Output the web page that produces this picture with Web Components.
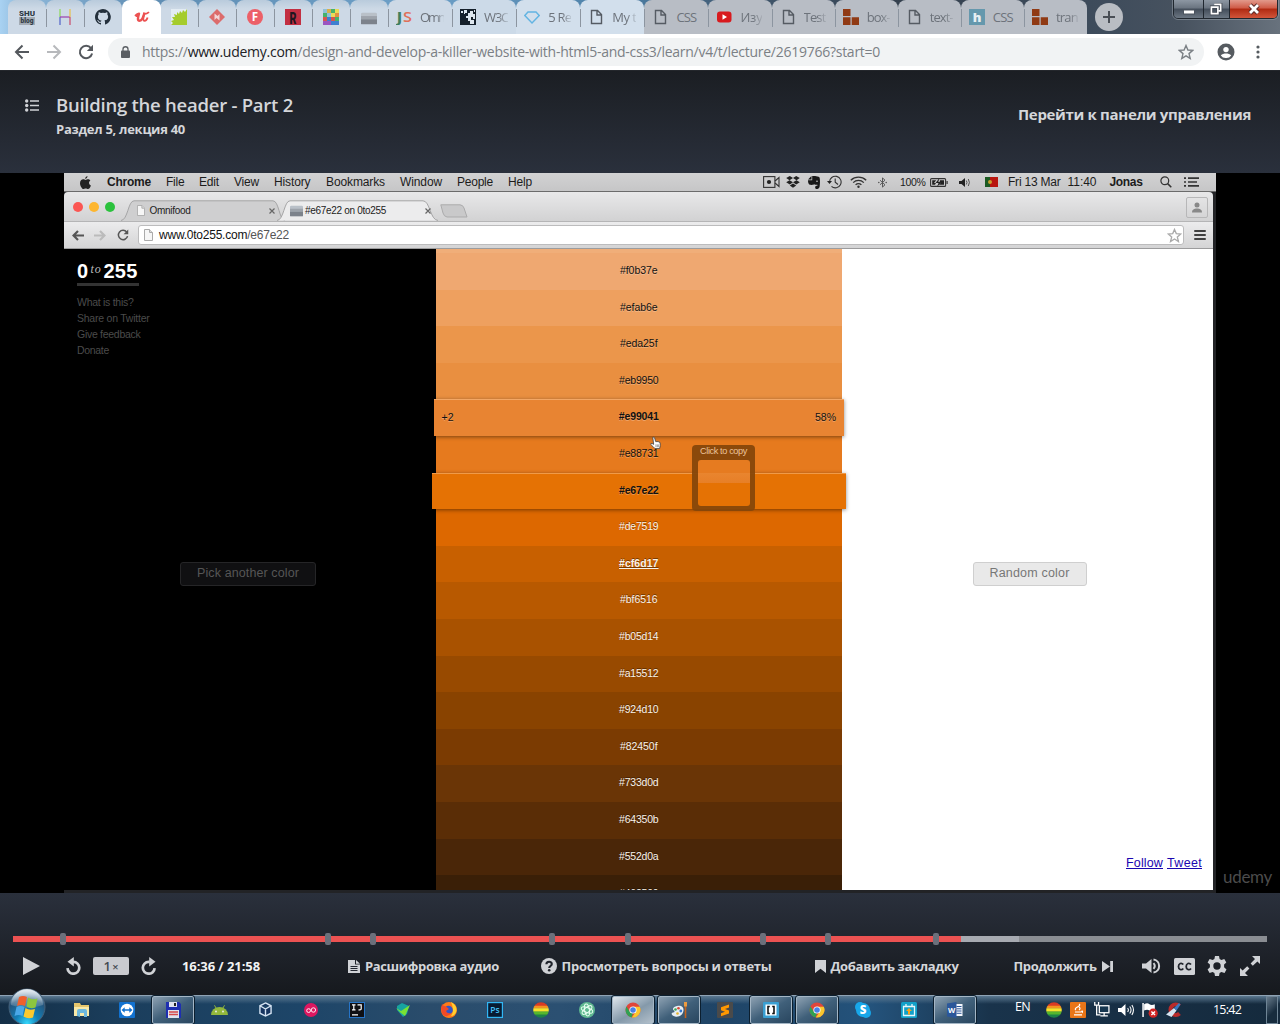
<!DOCTYPE html>
<html lang="ru">
<head>
<meta charset="utf-8">
<title>Building the header - Part 2</title>
<style>
html,body{margin:0;padding:0;background:#000}
body{width:1280px;height:1024px;overflow:hidden}
</style>
</head>
<body>
<desktop-screen></desktop-screen>
<script>
const ICONS = {
shu:['0 0 16 16','<rect y="8" width="16" height="8" fill="#a3abb4"/><text x="8" y="7" font-family="Roboto" font-weight="900" font-size="8" textLength="16" lengthAdjust="spacingAndGlyphs" text-anchor="middle" fill="#2f3b46">SHU</text><text x="8" y="14" font-family="Roboto" font-weight="900" font-size="6.5" textLength="13" lengthAdjust="spacingAndGlyphs" text-anchor="middle" fill="#2f3b46">blog</text>'],
habr:['0 0 16 16','<path d="M3 0v8" stroke="#8bd957" stroke-width="1.2"/><path d="M3 8v8" stroke="#4f62c8" stroke-width="1.2"/><path d="M3 8h10" stroke="#9b3fb0" stroke-width="1.2"/><path d="M13 0v8" stroke="#e8c04a" stroke-width="1.2"/><path d="M13 8v8" stroke="#c84a6a" stroke-width="1.2"/>'],
github:['0 0 16 16','<path fill="#24303c" d="M8 0C3.6 0 0 3.6 0 8c0 3.5 2.3 6.5 5.5 7.6.4.1.5-.2.5-.4v-1.4c-2.2.5-2.7-1-2.7-1-.4-.9-.9-1.2-.9-1.2-.7-.5.1-.5.1-.5.8.1 1.2.8 1.2.8.7 1.3 1.9.9 2.3.7.1-.5.3-.9.5-1.1-1.8-.2-3.6-.9-3.6-4 0-.9.3-1.6.8-2.1-.1-.2-.4-1 .1-2.1 0 0 .7-.2 2.2.8a7.6 7.6 0 0 1 4 0c1.500-1 2.200-.8 2.200-.8.4 1.100.2 1.900.1 2.100.5.6.8 1.300.8 2.100 0 3.100-1.900 3.700-3.700 3.900.3.3.6.8.6 1.500v2.200c0 .2.1.5.6.4A8 8 0 0 0 8 0z"/>'],
udemy:['0 0 16 16','<path d="M1.200 7.200Q3.500 4.800 5 4.600C4.200 7.500 3 11.800 5.200 11.800 7.500 11.800 9.600 7.500 10.500 3.500" fill="none" stroke="#ec5252" stroke-width="2.400" stroke-linejoin="round"/><path d="M10.300 4C9.300 8 8.600 11.800 10.500 11.800 12 11.800 13 10.500 13.600 8.500M10 5.200Q13 5 15 3.200" fill="none" stroke="#ec5252" stroke-width="1.800"/>'],
leaf:['0 0 16 16','<rect width="16" height="16" fill="#e3ecf3"/><path fill="#a5cc2c" d="M16 0v16H0l2-2-2-2 3-1-2-3 3 0-1-3 3 1 0-3 2 2 1-3 2 2 1-3 2 2z"/>'],
diamond:['0 0 16 16','<path fill="#dc6c6c" d="M8 0l8 8-8 8-8-8z"/><path fill="#f3d6d8" d="M5.500 4.500v6.500l2-2 3 2.500V5l-2 2z"/>'],
fcircle:['0 0 16 16','<circle cx="8" cy="8" r="8" fill="#ec6068"/><text x="8" y="12.300" text-anchor="middle" font-family="Open Sans" font-weight="700" font-size="11.500" fill="#fff">F</text>'],
rbox:['0 0 16 16','<rect width="16" height="16" fill="#c22f42"/><text x="8" y="14.500" text-anchor="middle" font-family="Roboto" font-weight="900" font-size="17" textLength="7" lengthAdjust="spacingAndGlyphs" fill="#1f1720">R</text>'],
mosaic:['0 0 16 16','<rect width="16" height="16" fill="#d8b04a"/><path fill="#8fc0d8" d="M0 0h4v4H0zM4 4h4v4H4z"/><path fill="#46b26b" d="M0 4h4v4H0zM8 0h4v4H8zM12 8h4v4h-4z"/><path fill="#3d7fd0" d="M4 8h4v4H4zM8 12h8v4H8z"/><path fill="#d85550" d="M0 8h4v4H0zM8 8h4v4H8z"/><path fill="#9a55c0" d="M0 12h8v4H0z"/><path fill="#e9db58" d="M12 0h4v4h-4zM8 4h4v4H8z"/><path fill="#e09040" d="M12 4h4v4h-4z"/>'],
grays:['0 0 16 16','<rect y="1" width="16" height="14" rx="1.500" fill="#b9c0c8"/><path fill="#9da3ab" d="M0 5h16v4H0z"/><path fill="#7c828b" d="M0 9h16v6H0z"/>'],
js:['0 0 16 16','<text x="0" y="13" font-family="Open Sans" font-weight="600" font-size="14" textLength="7" lengthAdjust="spacingAndGlyphs" fill="#3f7f5f">J</text><text x="7" y="13" font-family="Open Sans" font-weight="600" font-size="14" textLength="9" lengthAdjust="spacingAndGlyphs" fill="#e07058">S</text>'],
w3c:['0 0 16 16','<rect width="16" height="16" fill="#15202b"/><path fill="#dde6ee" d="M1 2h2v2H1zM4 1h3v3H5v1H4zM8 4h2V2h3v3h2v5h-2V8h-2v3h3v4h-4v-3H8V9H6V7h2zM14 1h1v2h-1z"/>'],
gem:['0 0 16 16','<path fill="none" stroke="#62b4e2" stroke-width="1.400" d="M4 3h8l3.200 3.500L8 14 .8 6.500z"/>'],
page:['0 0 16 16','<path fill="none" stroke="#555b63" stroke-width="1.400" d="M3.500 1.500h6l4 4v9h-10zM9 1.500V6h4.500"/>'],
yt:['0 0 16 16','<rect x="1" y="2.500" width="14.500" height="11" rx="3" fill="#d81a1e"/><path fill="#fff" d="M6.500 5.200v5.500L11 8z"/>'],
bricks:['0 0 16 16','<path fill="#903a14" d="M0 0h7.500v7H0zM0 8.200h7.500V16H0zM8.700 8.200H16V16H8.700z"/>'],
hbox:['0 0 16 16','<rect width="16" height="16" fill="#6598ad"/><text x="8" y="13" text-anchor="middle" font-family="Open Sans" font-weight="800" font-size="13" fill="#e8eff3">h</text>'],
back:['0 0 16 16','<path d="M15 8H2M8.500 1.500 2 8l6.500 6.500" fill="none" stroke="currentColor" stroke-width="2"/>'],
fwd:['0 0 16 16','<path d="M1 8h13M7.500 1.500 14 8l-6.500 6.500" fill="none" stroke="currentColor" stroke-width="2"/>'],
reload:['0 0 16 16','<path d="M13 4.200A6.200 6.200 0 1 0 14.100 9.500" fill="none" stroke="currentColor" stroke-width="2"/><path d="M15 .8v6.200H8.800z" fill="currentColor"/>'],
lock:['0 0 10 13','<rect y="5" width="10" height="8" rx="1" fill="#5a5e63"/><path d="M2.200 5.500V3.600a2.800 2.800 0 0 1 5.600 0v1.900" fill="none" stroke="#5a5e63" stroke-width="1.400"/>'],
star:['0 0 16 16','<path d="M8 1.500l1.900 4.500 4.800.4-3.700 3.200 1.200 4.800L8 11.800l-4.200 2.600L5 9.600 1.300 6.400l4.800-.4z" fill="none" stroke="currentColor" stroke-width="1.400"/>'],
user:['0 0 18 18','<circle cx="9" cy="9" r="8.500" fill="#565b60"/><circle cx="9" cy="6.600" r="2.700" fill="#fff"/><path fill="#fff" d="M3.800 12.500C5 10.800 7 10.400 9 10.400s4 .4 5.200 2.100A6 6 0 0 1 9 15a6 6 0 0 1-5.200-2.500z"/>'],
dots:['0 0 4 14','<circle cx="2" cy="2" r="1.600" fill="#565b60"/><circle cx="2" cy="7" r="1.600" fill="#565b60"/><circle cx="2" cy="12" r="1.600" fill="#565b60"/>'],
plus:['0 0 28 28','<circle cx="14" cy="14" r="14" fill="#b9bdc3"/><path d="M14 8v12M8 14h12" stroke="#4a4f56" stroke-width="2"/>'],
minw:['0 0 12 12','<rect x=".5" y="5" width="11" height="4" fill="#fff" stroke="#4c545f"/>'],
restw:['0 0 14 14','<path d="M4.500 1.500h7v7h-2M1.500 4.500h7v7h-7z" fill="none" stroke="#3e454f" stroke-width="3.600"/><path d="M4.500 1.500h7v7h-2M1.500 4.500h7v7h-7z" fill="none" stroke="#fff" stroke-width="1.800"/>'],
closew:['0 0 12 12','<path d="M2 2l8 8M10 2l-8 8" stroke="#5a2a28" stroke-width="4.600"/><path d="M2 2l8 8M10 2l-8 8" stroke="#fff" stroke-width="2.800"/>'],
list:['0 0 14 13','<path d="M5 2h9M5 6.500h9M5 11h9" stroke="#d0d2d6" stroke-width="1.700"/><circle cx="1.700" cy="2" r="1.700" fill="#d0d2d6"/><circle cx="1.700" cy="6.500" r="1.700" fill="#d0d2d6"/><circle cx="1.700" cy="11" r="1.700" fill="#d0d2d6"/>'],
apple:['0 0 11 13','<path fill="#222" d="M7.500 0c.1 1.500-1 2.800-2.300 2.900C5.100 1.500 6.200.3 7.500 0zM8 3.300c.9 0 1.800.5 2.400 1.300-2 1.200-1.700 4 .5 4.800C10.400 11 9.300 13 8 13c-.9 0-1.200-.6-2.300-.6-1.100 0-1.500.6-2.300.6C1.900 13 0 9.700 0 7.200c0-2.500 1.600-3.900 3.200-3.900 1 0 1.800.7 2.500.7S7 3.300 8 3.300z"/>'],
cam:['0 0 17 12','<rect x=".6" y=".6" width="11.300" height="10.800" fill="none" stroke="#333" stroke-width="1.100"/><circle cx="6" cy="6" r="2.100" fill="#222"/><path d="M12 5l4-3.500v9L12 7" fill="none" stroke="#333" stroke-width="1.100"/>'],
dropbox:['0 0 14 13','<path fill="#222" d="M3.800 0L7 2.300 3.500 4.600.2 2.300zM10.200 0l3.600 2.300-3.300 2.300L7 2.300zM.2 6.800l3.300-2.200L7 6.900 3.800 9.200zM13.800 6.800l-3.300-2.200L7 6.900l3.200 2.300zM3.800 10.200L7 8l3.200 2.200L7 12.700z"/>'],
evernote:['0 0 12 13','<path fill="#181818" d="M0 3.500L3.500 0v3.500zM4.200 0h3c1 .6 3.600.5 4.200 1.200.8 1.500.7 6.300.2 9.500-.3 1.800-1.500 2.300-3.400 2.300-1.400 0-1.400-3 .2-3.200h1V8.700c-2-.3-3 .6-3.200-.7-.7 1.200-4 1-5 .4C.2 7.600 0 5.500 0 4.300h4.200z"/><circle cx="9" cy="5.300" r=".8" fill="#ccc"/>'],
tm:['0 0 15 14','<path d="M2.500 7a5.800 5.800 0 1 1 2 4.400" fill="none" stroke="#333" stroke-width="1.100"/><path d="M0 6h5L2.500 9z" fill="#222"/><path d="M8.200 3.500V7.200L11 9.500" fill="none" stroke="#333" stroke-width="1.100"/>'],
wifi:['0 0 17 12','<path d="M.8 4.200a11 11 0 0 1 15.400 0M3.200 6.600a7.600 7.600 0 0 1 10.600 0M5.600 8.900a4.200 4.200 0 0 1 5.800 0" fill="none" stroke="#333" stroke-width="1.300"/><circle cx="8.500" cy="10.700" r="1.200" fill="#333"/>'],
bt:['0 0 9 12','<path d="M2 3.500l5 5L4.500 11V1L7 3.500l-5 5" fill="none" stroke="#555" stroke-width="1"/><circle cx=".8" cy="6" r=".8" fill="#555"/><circle cx="8.200" cy="6" r=".8" fill="#555"/>'],
batt:['0 0 18 9','<rect x=".6" y=".6" width="15" height="7.800" rx="1" fill="none" stroke="#333" stroke-width="1.100"/><path d="M16.500 3h1.200v3h-1.200z" fill="#333"/><path fill="#222" d="M2.200 2.200h4L4 5h2L5 6.800H2.200zM10 2.200h4v4.600H9l2.200-2.500H9.500z"/><path d="M9.500 0L5.500 5h3L7 9l4.500-5H8.300z" fill="#222"/>'],
spk:['0 0 11 9','<path fill="#222" d="M0 3h2.500L6 0v9L2.500 6H0z"/><path d="M7.300 2.500q1.400 2 0 4M9.300 1q2.200 3.500 0 7" fill="none" stroke="#555" stroke-width="1"/>'],
flag:['0 0 13 10','<rect width="13" height="10" fill="#b8160f"/><rect width="5" height="10" fill="#1b5a22"/><circle cx="5" cy="5" r="2" fill="#c99e2c"/>'],
mag:['0 0 12 12','<circle cx="4.800" cy="4.800" r="3.900" fill="none" stroke="#333" stroke-width="1.200"/><path d="M7.600 7.600l3.700 3.700" stroke="#333" stroke-width="1.500"/>'],
nlist:['0 0 15 10','<path d="M4 1.200h11M4 5h9M4 8.800h11" stroke="#333" stroke-width="1.700"/><path d="M0 1.200h2M0 5h2M0 8.800h2" stroke="#333" stroke-width="1.700"/>'],
mback:['0 0 12 11','<path d="M12 5.500H2M6 1L1.500 5.500 6 10" fill="none" stroke="currentColor" stroke-width="2.200"/>'],
mfwd:['0 0 12 11','<path d="M0 5.500h10M6 1l4.500 4.500L6 10" fill="none" stroke="currentColor" stroke-width="2.200"/>'],
doc:['0 0 9 12','<path d="M.5.5h5l3 3v8h-8z" fill="#f6f6f6" stroke="#aaa"/><path d="M5.500.5v3h3" fill="#ddd" stroke="#aaa"/>'],
x:['0 0 6 6','<path d="M.5.500l5 5M5.500.500l-5 5" stroke="#666" stroke-width="1.200"/>'],
person:['0 0 10 11','<circle cx="5" cy="3" r="2.500" fill="#888"/><path d="M0 10.500C0 7.500 2.200 6.500 5 6.500s5 1 5 4z" fill="#888"/>'],
play:['0 0 17 18','<path d="M0 0l17 9-17 9z" fill="#d0d2d6"/>'],
rew:['0 0 17 18','<path d="M8 4.600H9a5.900 5.900 0 1 1-5.900 6.200" fill="none" stroke="#d0d2d6" stroke-width="2.700" transform="translate(-.6 .3)"/><path d="M8.800 0v9.400L2.500 4.800z" fill="#d0d2d6"/>'],
ffw:['0 0 17 18','<g transform="translate(17 0) scale(-1 1)"><path d="M8 4.600H9a5.900 5.900 0 1 1-5.900 6.200" fill="none" stroke="#d0d2d6" stroke-width="2.700" transform="translate(.3 .3)"/><path d="M8.800 0v9.400L2.500 4.800z" fill="#d0d2d6"/></g>'],
trans:['0 0 12 13','<path d="M0 0h7v4.500h5V13H0zM8 0l4 3.700H8z" fill="#d0d2d6"/><path d="M2.500 6.500h7M2.500 8.500h7M2.500 10.500h7" stroke="#22262f" stroke-width="1"/>'],
quest:['0 0 16 16','<circle cx="8" cy="8" r="8" fill="#d0d2d6"/><path d="M5.400 6.300C5.400 3 10.800 3 10.800 6c0 2-2.600 2-2.600 4" fill="none" stroke="#20242c" stroke-width="2.100"/><circle cx="8.200" cy="12.200" r="1.300" fill="#20242c"/>'],
bookm:['0 0 11 13','<path d="M0 0h11v13L5.500 8.800 0 13z" fill="#d0d2d6"/>'],
next:['0 0 11 11','<path d="M0 0l8 5.500L0 11zM8.200 0H11v11H8.200z" fill="#d0d2d6"/>'],
vol:['0 0 19 16','<path d="M0 5.500h4l5.500-4.500v14L4 10.500H0z" fill="#d0d2d6"/><path d="M11.500 5.200q2.500 2.800 0 5.600M11.500 1.500c7.500 1 7.500 12 0 13" fill="none" stroke="#d0d2d6" stroke-width="2"/>'],
cc:['0 0 21 17','<rect width="21" height="17" rx="1.500" fill="#d0d2d6"/><path d="M9.300 6.500C7.500 4.300 4.500 5.300 4.500 8.500s3 4.200 4.800 2M17 6.500c-1.800-2.200-4.800-1.200-4.800 2s3 4.200 4.800 2" fill="none" stroke="#20242c" stroke-width="1.800"/>'],
gear:['0 0 20 20','<path fill="#d0d2d6" fill-rule="evenodd" d="M8 0h4l.6 3 1.800.9L17.300 3l2 3.400-2.200 2v2.800l2.400 2.200-2 3.500-3.100-1-1.800 1L12 20H8l-.6-3-1.800-1-3 1-2-3.600 2.300-2.100V8.600L.6 6.500l2-3.500 3 .9L7.400 3zM10 6.300a3.700 3.700 0 1 0 0 7.400 3.700 3.700 0 0 0 0-7.400z"/>'],
expand:['0 0 20 20','<path fill="#d0d2d6" d="M12 0h8v8l-2.600-2.600-4.600 4.400-2.200-2.200L15 3zM8 20H0v-8l2.600 2.600 4.600-4.400 2.200 2.200L5 17z"/>'],
orb:['0 0 38 38','<defs><radialGradient id="o" cx=".5" cy=".95" r=".9"><stop offset="0" stop-color="#35d6fa"/><stop offset=".35" stop-color="#1380b8"/><stop offset=".75" stop-color="#24557d"/><stop offset="1" stop-color="#9ab4c8"/></radialGradient><linearGradient id="g" x2="0" y2="1"><stop offset="0" stop-color="#fff" stop-opacity=".75"/><stop offset="1" stop-color="#fff" stop-opacity=".1"/></linearGradient></defs><circle cx="19" cy="19" r="18" fill="url(#o)" stroke="#456078"/><path d="M3 17A16 16 0 0 1 35 17Q19 23 3 17z" fill="url(#g)"/><path fill="#f0602c" d="M11 9q4-2 8 0l-2 9q-4-2-8 0z"/><path fill="#8cc63f" d="M20 9.500q4 3 9.500 1l-2 9q-5 2-9-1z"/><path fill="#4aa8e8" d="M8.500 19q4-2 8 0l-2 9q-4-2-8 0z"/><path fill="#fcc92e" d="M17.500 20q4 3 9.500 1l-2 8.500q-5 2-9.500-1z"/>'],
folder:['0 0 17 17','<path fill="#e6c66c" d="M1 2h6l1 2h8v11H1z"/><path fill="#f9e9a8" d="M1 6h15v9H1z"/><path fill="#6db8dd" d="M4 15v-5q0-2 2-2h6q2 0 2 2v6h-3v-4H7v4z"/>'],
tv:['0 0 16 16','<rect width="16" height="16" rx="1" fill="#1272d0"/><circle cx="8" cy="8" r="6.300" fill="#fff"/><path fill="#1272d0" d="M2.500 8l3.200-2.700v1.900h4.600V5.300L13.500 8l-3.200 2.700V8.800H5.700v1.900z"/>'],
floppy:['0 0 16 16','<path fill="#1e2fb0" d="M1 0h13l2 2v14H1z"/><path fill="#dfe3ee" d="M4 0h8v5H4zM3 8h11v8H3z"/><path fill="#222" d="M9 1h2v3H9z"/><path d="M4 10h9M4 12.500h9" stroke="#d84848" stroke-width="1.400"/>'],
android:['0 0 17 10','<path fill="#93b83c" d="M0 10a8.500 8 0 0 1 17 0z"/><path d="M5 3L3.500.3M12 3L13.500.3" stroke="#93b83c"/><circle cx="5" cy="6.500" r=".9" fill="#eee"/><circle cx="12" cy="6.500" r=".9" fill="#eee"/>'],
vbox:['0 0 14 16','<path d="M7 1l6 3v8l-6 3-6-3V4zM1 4l6 3.500L13 4M7 7.500V15" fill="#16345f" stroke="#d5e3f2" stroke-width="1.500"/>'],
oo:['0 0 14 14','<circle cx="7" cy="7" r="7" fill="#dd1760"/><circle cx="4.600" cy="7.600" r="1.900" fill="none" stroke="#fff" stroke-width=".9"/><circle cx="9.400" cy="7" r="2.200" fill="none" stroke="#fff" stroke-width=".9"/>'],
ij:['0 0 16 16','<rect x=".5" y=".5" width="15" height="15" fill="#101014" stroke="#2674c8"/><path d="M3 2.800h3.500M4.800 2.800v5M3 7.800h3.500M8.500 2.800h3.700v4q0 1.500-2.700 1M3 12.800h6" fill="none" stroke="#fff" stroke-width="1.200"/>'],
gem2:['0 0 14 14','<path fill="#17a3a0" d="M1 3l5-3 7 3-2 8-4 3-6-7z"/><path fill="#7ae234" d="M0 5l5 3 9-6-5 11-4-3z"/>'],
ff:['0 0 16 16','<circle cx="8" cy="8" r="8" fill="#ff7a18"/><path fill="#ffd02f" d="M10 0q6 3 5.500 9Q14 14 10 14q4-5 0-14z"/><circle cx="7.500" cy="8" r="4.300" fill="#3155c8"/><path fill="#f04a28" d="M1 2q1 2 4 2.500L8 7 5 9q1 3 5 2-3 5-8 2-3-4-1-11z"/>'],
ps:['0 0 16 16','<rect x=".6" y=".6" width="14.800" height="14.800" fill="#071b33" stroke="#31b6f5" stroke-width="1.200"/><text x="8" y="11.300" text-anchor="middle" font-family="Open Sans" font-weight="600" font-size="8.500" fill="#44c1fa">Ps</text>'],
rainbow:['0 0 16 16','<clipPath id="r"><circle cx="8" cy="8" r="7.800"/></clipPath><g clip-path="url(#r)"><path fill="#d93a24" d="M0 0h16v4H0z"/><path fill="#f39220" d="M0 3.800h16v2.600H0z"/><path fill="#f7e32b" d="M0 6.200h16v3.600H0z"/><path fill="#57b62d" d="M0 9.600h16V13H0z"/><path fill="#1d8247" d="M0 12.600h16V16H0z"/></g>'],
atom:['0 0 16 16','<circle cx="8" cy="8" r="8" fill="#5fb890"/><g fill="none" stroke="#e8fff2" stroke-width="1"><ellipse cx="8" cy="8" rx="6" ry="2.400" transform="rotate(20 8 8)"/><ellipse cx="8" cy="8" rx="6" ry="2.400" transform="rotate(80 8 8)"/><ellipse cx="8" cy="8" rx="6" ry="2.400" transform="rotate(140 8 8)"/></g>'],
chrome:['0 0 16 16','<circle cx="8" cy="8" r="7.500" fill="#e0453a"/><path fill="#30a152" d="M1.500 4.500L5 10l3 1-1.500 4.400A7.500 7.500 0 0 1 1.500 4.500z"/><path fill="#fbc82d" d="M8 4.800h6.800A7.500 7.500 0 0 1 6.800 15.400L11 9.500z"/><circle cx="8" cy="8" r="3.600" fill="#fff"/><circle cx="8" cy="8" r="2.800" fill="#4781e8"/>'],
paint:['0 0 17 16','<path fill="#e6edf4" d="M6 4c4-1 7 1 6.500 4.500C12 13 8 15.500 4 14.500c-4-1-4-4-2-4s2-1 .5-2.500S3 4.500 6 4z"/><circle cx="4.500" cy="7.500" r="1.300" fill="#3faa55"/><circle cx="7.500" cy="6.300" r="1.300" fill="#d84a38"/><circle cx="9.800" cy="9" r="1.400" fill="#3478d0"/><circle cx="6.500" cy="11.500" r="1.300" fill="#e6b32e"/><path d="M14.500 1v15" stroke="#c4621c" stroke-width="1.600"/><path d="M13 0h3v4.500h-3z" fill="#eb9b40"/>'],
subl:['0 0 16 16','<rect width="16" height="16" rx="1" fill="#4a4a4a"/><path fill="#ff9800" d="M12 2.500v3L8 7l4 1.500v3l-8 2.700v-3L8 9.700 4 8.200v-3z"/>'],
brack:['0 0 16 16','<rect width="16" height="16" rx="1" fill="#3a9fd2"/><rect x="2.500" y="2.500" width="11" height="11" fill="#fff"/><path d="M6.800 4.500H5v7h1.800M9.200 4.500H11v7H9.200" fill="none" stroke="#111" stroke-width="1.600"/>'],
skype:['0 0 16 16','<circle cx="5" cy="5" r="5" fill="#18a7ea"/><circle cx="11" cy="11" r="5" fill="#18a7ea"/><circle cx="8" cy="8" r="7" fill="#18a7ea"/><text x="8" y="12.200" text-anchor="middle" font-family="Open Sans" font-weight="800" font-size="11.500" fill="#fff">S</text>'],
cal:['0 0 16 16','<rect width="16" height="16" rx="1.500" fill="#12a0c8"/><path d="M2.500 4.500h11v9h-11zM5 2v3M11 2v3" fill="none" stroke="#e8f6fa" stroke-width="1.300"/><path fill="#f9a11b" d="M8 6l3 3H9v3.500H7V9H5z"/>'],
word:['0 0 16 16','<path d="M8 2h7.500v12H8z" fill="#f4f7fc"/><path d="M9.500 4.500h5M9.500 6.800h5M9.500 9h5M9.500 11.300h5" stroke="#2b579a" stroke-width="1"/><path fill="#2b579a" d="M0 1.500L9.500 0v16L0 14.500z"/><text x="4.700" y="11" text-anchor="middle" font-family="Open Sans" font-weight="700" font-size="7.500" fill="#fff">W</text>'],
java:['0 0 16 16','<rect width="16" height="16" rx="1" fill="#e87518"/><path d="M5 10h6M4 12.800h8M6 8q-2-1 1.500-3T9 2M9 8q2-1.500 0-3M11 9.500q2.500-1.500 1 1.500" fill="none" stroke="#fff" stroke-width="1.200"/>'],
net:['0 0 15 14','<rect x="5" y="3.500" width="9" height="6.500" fill="#16364f" stroke="#fff" stroke-width="1.200"/><path d="M6 13h7M9.500 10v3M2.500 5v7H6M.7 0v3h3.600V0M2.500 3v2" fill="none" stroke="#fff" stroke-width="1.200"/>'],
tvol:['0 0 15 14','<path fill="#fff" d="M0 5h3l4-4v12L3 9H0z"/><path d="M9 5q1.500 2 0 4M11 3.500q2.500 3.500 0 7M13 2q3 5 0 10" fill="none" stroke="#fff"/>'],
tflag:['0 0 15 15','<path d="M1 1v13" stroke="#fff" stroke-width="1.400"/><path fill="#fff" d="M2 2q3-1.500 5 0t5 0v6q-3 1.500-5 0t-5 0z"/><circle cx="10.500" cy="10.500" r="4.300" fill="#cf2424"/><path d="M8.800 8.800l3.400 3.400M12.200 8.800l-3.400 3.400" stroke="#fff" stroke-width="1.300"/>'],
ccl:['0 0 16 16','<path d="M13.500 4A5.300 5.300 0 1 0 13.500 11.500" fill="none" stroke="#b92a2a" stroke-width="4"/><path fill="#d5e3f0" d="M0 12.500L8 6l2.500 2.500L5.500 15z"/><path fill="#3878c0" d="M8 6l5-5 1.500 1.500-4 6z"/>'],
hand:['0 0 12 15','<path d="M3 1.500q1.500-1 2 .5l1.200 4q3-.5 4.800 1 .8 3-.5 6.500h-5Q3 11 .8 9q0-1.500 1.500-1L4 9z" fill="#fff" stroke="#444" stroke-width=".9"/><path d="M6.500 9v3M8 9v3M9.500 9v3" stroke="#666" stroke-width=".7"/>']
};
const part = (name, html) => customElements.define(name, class extends HTMLElement {
  constructor(){ super(); this.attachShadow({mode:'open'}).innerHTML = html; }
});
const I = (n,w,h,s='') => `<ui-icon n="${n}" w="${w}" h="${h||w}" style="${s}"></ui-icon>`;
const T = (t,w,s='') => `<fit-text w="${w}" style="${s}">${t}</fit-text>`;

/* browser tab strip */
const small = ['shu','habr','github','udemy','leaf','diamond','fcircle','rbox','mosaic','grays'];
const wide = [['js','Omn',24],['w3c','W3C',24],['gem','5 Re',23],['page','My t',24],['page','CSS',20],['yt','Изу',22],['page','Test',22],['bricks','box-',23],['page','text-',23],['hbox','CSS',20],['bricks','tran',22]];
const tint = i => i < 11 ? '#cdd9e6' : i < 12 ? '#ccdae8' : i < 14 ? '#d2dfec' : '#b8bdc5';
part('browser-tabs', `<style>
:host{display:flex;height:34px;background:linear-gradient(90deg,#a9d2f2 0,#8fb9db 20px,#5f8db3 150px,#6da0c8 420px,#4c7fa6 620px,#41586f 740px,#34404e 900px,#3d4b5b 1090px,#47525f 1180px,#68727d 1280px);font:13px/34px "Open Sans",sans-serif;color:#6d737b;padding-left:8px;box-sizing:border-box}
.t{display:flex;align-items:center;box-sizing:border-box;height:34px;border-radius:8px 8px 0 0;position:relative;flex:none}
.s{width:38px;justify-content:center}.w{width:63.1px;padding-left:8px;gap:8px}.w.k{width:64.1px}
.t::after{content:"";position:absolute;right:-1px;top:9px;height:18px;width:1px;background:#8c95a0;z-index:1}
.on::after,.pre::after,.end::after{display:none}
.on{background:#fff!important;width:39px;margin-right:-1px;z-index:1}
.fade{-webkit-mask:linear-gradient(90deg,#000 60%,#0003)}
.btns{display:flex;margin-left:50px;height:18px;border:1px solid #20272f;outline:1px solid #9aa3ac88;border-top:0;border-radius:0 0 5px 5px;overflow:hidden}
.btns div{display:flex;align-items:center;justify-content:center;background:linear-gradient(#8d97a3,#6a7480 45%,#434d5a 50%,#6b7682);border-right:1px solid #20272f}
.btns .x{background:linear-gradient(#e29a8c,#cf5a46 45%,#b02a12 50%,#d2553a);border:0}
</style>${small.map((n,i)=>`<div class="t s ${i==3?'on':i==2?'pre':''}" style="background:linear-gradient(#b9cbdc,${tint(i)} 9px)">${n=='grays'?I(n,16,13,'margin-top:2px'):I(n,16)}</div>`).join('')}${wide.map(([n,l,w],i)=>`<div class="t w ${i<5?'k':''} ${i==10?'end':''}" style="background:${tint(i+10)}">${I(n,16)}<div class="${l=='CSS'?'':'fade'}">${T(l,w)}</div></div>`).join('')}
<div style="display:flex;align-items:center;margin-left:8px">${I('plus',28)}</div>
<div class="btns"><div style="width:29px">${I('minw',12,12,'margin-top:3px')}</div><div style="width:25px">${I('restw',13)}</div><div class="x" style="width:47px">${I('closew',12)}</div></div>`);

part('address-bar', `<style>
:host{display:flex;align-items:center;height:36px;background:#fff;border-bottom:1px solid #24272c;padding-left:14px;color:#54585d}
.box{display:flex;align-items:center;margin-left:14px;height:28px;border-radius:14px;background:#f1f3f4;width:1096px;padding-left:13px;box-sizing:border-box;font:14px/28px "Open Sans",sans-serif;color:#7b8085}
b{font-weight:400;color:#202124}
</style>${I('back',16)}${I('fwd',16,16,'margin-left:16px;color:#b7b9bc')}${I('reload',16,16,'margin-left:16px')}
<div class="box">${I('lock',9,12)}${T('https://<b>www.udemy.com</b>/design-and-develop-a-killer-website-with-html5-and-css3/learn/v4/t/lecture/2619766?start=0',738,'margin-left:12px')}${I('star',16,16,'margin-left:298px')}</div>
${I('user',18,18,'margin-left:13px')}${I('dots',4,14,'margin-left:21px')}`);

part('lecture-header', `<style>
:host{display:flex;height:102px;box-sizing:border-box;background:linear-gradient(#1b1e23,#2a303c);color:#d4d6da;font-family:"Open Sans",sans-serif;padding:0 29px 0 25px}
.c{margin-left:17px;padding-top:22px;display:flex;flex-direction:column}
</style>${I('list',14,13,'margin-top:28px')}
<div class="c">${T('Building the header - Part 2',237,'font:600 18.500px/24px &quot;Open Sans&quot;')}${T('Раздел 5, лекция 40',129,'font:700 13px/24px &quot;Open Sans&quot;')}</div>
<div style="margin-left:auto;padding-top:31px">${T('Перейти к панели управления',233,'font:700 15px/24px &quot;Open Sans&quot;')}</div>`);

/* recorded desktop inside the video */
part('mac-menubar', `<style>
:host{display:flex;align-items:center;height:18px;background:linear-gradient(#d2d2d3,#c6c6c7);color:#1c1c1c;font:12px/18px "Liberation Sans",sans-serif;padding-left:16px;border-bottom:1px solid #6b6b6b}
</style>${I('apple',11,13)}${T('<b>Chrome</b>',44,'margin-left:16px')}${[['File',18.5,15],['Edit',20,14.500],['View',25,15],['History',36.500,15],['Bookmarks',59,15.500],['Window',42,15],['People',36,15],['Help',24,15]].map(a=>T(a[0],a[1],`margin-left:${a[2]}px`)).join('')}
${I('cam',17,12,'margin-left:231px')}${I('dropbox',14,12,'margin-left:6px')}${I('evernote',12,13,'margin-left:8px')}${I('tm',15,14,'margin-left:7px')}${I('wifi',17,12,'margin-left:8px')}${I('bt',9,11,'margin-left:11px')}
${T('100%',25.500,'margin-left:13px;font-size:10.500px')}${I('batt',18,9,'margin-left:4px')}${I('spk',11,9,'margin-left:11px')}${I('flag',13,10,'margin-left:15px')}${T('Fri 13 Mar',52.500,'margin-left:10.500px')}${T('11:40',29,'margin-left:7px')}${T('<b>Jonas</b>',33,'margin-left:13px')}${I('mag',12,12,'margin-left:17px')}${I('nlist',15,10,'margin-left:12px')}`);

part('mac-tabs', `<style>
:host{display:flex;height:29px;background:linear-gradient(#e8e8e9,#d2d2d3);border-radius:4px 4px 0 0;font:10px/14px "Liberation Sans",sans-serif;color:#222;box-sizing:border-box;padding:8px 5px 0 9px}
i{width:10px;height:10px;border-radius:50%;margin:2px 6px 0 0}
.tab{display:grid;height:21px}.tab>*{grid-area:1/1}.r{display:flex;align-items:center;z-index:1}
</style><i style="background:#fb5652"></i><i style="background:#fdb62f"></i><i style="background:#2bc23d;margin-right:6px"></i>
<div class="tab" style="width:164px"><svg width="164" height="21"><path d="M0 20.500C7 20 7 .8 13 .8H152C158 .8 158 20 164 20.500" fill="#cfcfd0" stroke="#a5a5a6"/></svg><div class="r">${I('doc',8,11,'margin-left:16px')}${T('Omnifood',41,'margin-left:4.500px')}${I('x',6,6,'margin-left:78px')}</div></div>
<div class="tab" style="width:164px;margin-left:-8px"><svg width="164" height="21"><path d="M0 20.500C7 20 7 .8 13 .8H146C153 .8 153 20 161 20.500" fill="#ececed" stroke="#a5a5a6"/></svg><div class="r">${I('grays',13,12,'margin-left:13px')}${T('#e67e22 on 0to255',81,'margin-left:2px')}${I('x',6,6,'margin-left:38.500px')}</div></div>
<svg width="28" height="14" style="margin:4px 0 0 -1px"><path d="M.8.8H20Q23 1 24 4L27 13H7Q4 12.500 3 9z" fill="#c9c9ca" stroke="#ababac"/></svg>
<div style="margin:-3px 0 0 auto;width:20px;height:19px;border:1px solid #b7b7b8;border-radius:2px;display:flex;align-items:center;justify-content:center">${I('person',10,11)}</div>`);

part('mac-toolbar', `<style>
:host{display:flex;align-items:center;height:28px;box-sizing:border-box;background:linear-gradient(#ececed,#d4d4d5);border-top:1px solid #b5b5b6;border-bottom:1px solid #9c9c9d;padding-left:8px;color:#555;font:12px/18px "Liberation Sans",sans-serif}
.a{display:flex;align-items:center;margin-left:9px;width:1046px;height:20px;box-sizing:border-box;background:#fff;border:1px solid #bcbcbd;border-radius:3px;padding-left:5px}
b{font-weight:400;color:#111}u{display:flex;flex-direction:column;gap:1.500px;margin-left:10px}u s{width:12px;height:2.500px;background:#404040;border-radius:1px}
</style>${I('mback',12,11)}${I('mfwd',12,11,'margin-left:10px;color:#bbb')}${I('reload',12,12,'margin-left:11px')}
<div class="a">${I('doc',9,12)}${T('<b>www.0to255.com</b>/e67e22',130,'margin-left:6px')}${I('star',15,15,'margin-left:878px;color:#aaa')}</div><u><s></s><s></s><s></s></u>`);

part('side-dark', `<style>
:host{display:block;width:372px;box-sizing:border-box;background:#000;padding:11px 0 0 13px;font-family:"Liberation Sans",sans-serif;color:#4b4b4b}
.l{display:flex;align-items:flex-start;height:23px;color:#fff;width:61.5px;border-bottom:3px solid #333}
.n{display:flex;flex-direction:column;margin-top:8px;font-size:10.5px;line-height:16px}
.b{display:flex;justify-content:center;width:134px;height:22px;margin:204px 0 0 103px;border:1px solid #252527;border-radius:3px;background:#101012;font-size:12.5px;line-height:20px;color:#565656}
</style><div class="l">${T('0',11.500,'font:700 20px/22px &quot;Liberation Sans&quot;')}${T('to',11,'font:italic 12px/18px &quot;Liberation Serif&quot;;margin:0 2px 0 2px;color:#bbb')}${T('255',34,'font:700 20px/22px &quot;Liberation Sans&quot;')}</div>
<div class="n">${T('What is this?',56.500)}${T('Share on Twitter',72.500)}${T('Give feedback',63.500)}${T('Donate',32)}</div>
<div class="b">${T('Pick another color',102)}</div>`);

const rows = [['f0b37e','efa871'],['efab6e','eea05f'],['eda25f','eb964b'],['eb9950','e98f40'],['e99041','e88432'],['e88731','e67a1e'],['e67e22','e57204'],['de7519','dd6800'],['cf6d17','c86000'],['bf6516','b85900'],['b05d14','a95200'],['a15512','984a00'],['924d10','894300'],['82450f','7b3b02'],['733d0d','6a3506'],['64350b','5a2d06'],['552d0a','4a2608'],['462509','3a1f07']];
part('swatch-list', `<style>
:host{display:flex;flex-direction:column;width:405.500px;background:#f0ae79;padding-top:4px;box-sizing:border-box;font:10.5px/34.500px "Liberation Sans",sans-serif;position:relative;z-index:2}
.r{height:36.6px;flex:none;display:flex;justify-content:center;color:#111;box-sizing:border-box;text-shadow:0 1px #fff4}
.d{color:#f8f2ea;text-shadow:0 -1px #0006}
.last{flex:1 1 0;min-height:0;overflow:hidden}
.h,.m{position:relative;z-index:1;justify-content:space-between;border-top:1px solid #f3a765;box-shadow:0 1px 4px #0007;line-height:35px}
.h{margin:0 -2.500px;padding:0 8px}.m{margin:0 -4px;justify-content:center;border-top-color:#f09a48;line-height:33px}
.copy{position:absolute;z-index:3;left:256px;top:196px;width:63px;height:66px;box-sizing:border-box;border-radius:4px;background:#84460aee;padding:0 5.500px 5px;color:#ecc39a;font-size:9.2px;line-height:13px;display:flex;flex-direction:column;align-items:center}
.copy div{flex:1;width:100%;margin-top:2px;border-radius:3px;background:linear-gradient(#e67b20 0 28%,#e9852f 28%,#e77f27 50%,#e57204 50%)}
.hand{position:absolute;z-index:4;left:214px;top:187px}
</style>${rows.map(([t,c],i)=>{const w=[0,1,2,9,13].includes(i)?37.500:39.500;
return i==4?`<div class="r h" style="background:#${c}">${T('+2',12)}${T('<b>#e99041</b>',40,'margin-left:9px;line-height:33px')}${T('58%',21)}</div>`:
`<div class="r ${i>6?'d':''} ${i==6?'m':''} ${i==17?'last':''}" style="background:#${c}${i==17?';line-height:37px':''}">${T(i==6?`<b>#${t}</b>`:i==8?`<b style="text-decoration:underline">#${t}</b>`:'#'+t,w)}</div>`}).join('')}
<div class="copy">${T('Click to copy',47)}<div></div></div><span class="hand">${I('hand',11,14)}</span>`);

part('side-light', `<style>
:host{display:flex;flex-direction:column;flex:1;background:#fff;font:12.5px/20px "Liberation Sans",sans-serif}
.b{display:flex;justify-content:center;width:112px;height:22px;margin:313px 0 0 131px;border:1px solid #cfcfcf;border-radius:3px;background:#e9e9e9;color:#777}
.f{display:flex;gap:4px;justify-content:flex-end;margin:266.500px 11px 0 0;color:#1a06b0}
</style><div class="b">${T('Random color',80)}</div><div class="f">${T('<u>Follow</u>',37)}${T('<u>Tweet</u>',35)}</div>`);

part('video-stage', `<style>
:host{display:flex;height:720px;background:#000}
.m{width:1152px;margin-left:64px;background:#222326;display:flex;flex-direction:column}
.w{display:flex;flex-direction:column;width:1149px}
.c{display:flex;height:640.500px;overflow:hidden}
.u{align-self:flex-end;margin:0 0 5px 7px;font:400 17px/22px Lato,sans-serif;color:#4c4c4c}
</style><div class="m"><mac-menubar></mac-menubar><div class="w"><mac-tabs></mac-tabs><mac-toolbar></mac-toolbar><div class="c"><side-dark></side-dark><swatch-list></swatch-list><side-light></side-light></div></div></div><div class="u">${T('udemy',49)}</div>`);

part('player-controls', `<style>
:host{display:flex;flex-direction:column;height:102px;background:linear-gradient(#2a303c,#171a1f 95%);color:#d4d6da;font:700 13px/20px "Open Sans",sans-serif}
.p{position:relative;display:flex;height:6px;margin:43px 13px 0}
.p i{height:6px}.p b{position:absolute;top:-3px;width:6px;height:12px;border-radius:2px;background:#6b707b}
.r{display:flex;align-items:center;height:24px;margin:12px 0 0 23px}
.s{width:36px;height:18px;border-radius:2px;background:#c9cacf;color:#444951;margin:0 12px 0 11px;text-align:center;font:600 13px/18px "Open Sans"}
</style><div class="p"><i style="width:948px;background:#ec5252"></i><i style="width:58px;background:#a7aab1"></i><i style="flex:1;background:#8a8d92"></i>${[63,328,373,552,628,763,828,936].map(x=>`<b style="left:${x-16}px"></b>`).join('')}</div>
<div class="r">${I('play',17,18)}${I('rew',17,18,'margin-left:25px')}<div class="s">1 <span style="font-size:11px;margin-left:-2px">×</span></div>${I('ffw',17,18)}
${T('16:36 / 21:58',78,'margin-left:24px;color:#f2f3f4')}
${I('trans',12,13,'margin-left:88px')}${T('Расшифровка аудио',134,'margin-left:5px')}
${I('quest',16,16,'margin-left:41.500px')}${T('Просмотреть вопросы и ответы',210,'margin-left:5px')}
${I('bookm',11,13,'margin-left:43px')}${T('Добавить закладку',128,'margin-left:5px')}
${T('Продолжить',83,'margin-left:55px')}${I('next',11,11,'margin-left:5px')}
${I('vol',19,16,'margin-left:29px')}${I('cc',21,17,'margin-left:13px')}${I('gear',20,20,'margin-left:12px')}${I('expand',20,20,'margin-left:13px')}</div>`);

const apps = [['folder',17,17],['tv',16],['floppy',16,16,'a'],['android',17,10],['vbox',13,15],['oo',14],['ij',16],['gem2',14],['ff',16],['ps',16],['rainbow',16],['atom',16],['chrome',16,16,'a act'],['paint',17,16,'a'],['subl',16],['brack',16,16,'a'],['chrome',16,16,'a'],['skype',16],['cal',16],['word',16,16,'a']];
part('task-bar', `<style>
:host{display:flex;height:29px;position:relative;background:linear-gradient(#8fa3b5 0 1px,#5b7890 1px,#3d5d7a00 9px),linear-gradient(90deg,#142f47,#1b3e5c 120px,#1d4568 300px,#2a4c6b 430px,#2b5072 560px,#1f4466 720px,#24537c 870px,#19334b 990px,#152a3d);box-sizing:border-box;padding-left:60px;align-items:center}
.orb{position:absolute;left:8px;top:-7px;height:36px;overflow:hidden}
.c{display:flex;align-items:center;justify-content:center;width:42px;height:28px;margin:0 4px 0 0;box-sizing:border-box;flex:none}
.a{border:1px solid #a4b6c5;border-radius:2px;background:linear-gradient(150deg,#8da1b2,#40607a 50%,#29465f);outline:1px solid #0c1f2f}
.act{background:linear-gradient(150deg,#dfe6ec,#8499aa 55%,#b3c0cb)}
.en,.ck{font:12.500px/16px "Open Sans",sans-serif;color:#fff}
.sd{margin-left:25px;width:12px;height:28px;box-sizing:border-box;border:1px solid #6f8596;background:linear-gradient(135deg,#66798a,#172c3e 60%)}
</style><div class="orb">${I('orb',38)}</div>${apps.map(a=>`<div class="c ${a[3]||''}">${I(a[0],a[1],a[2]||a[1])}</div>`).join('')}
<div class="en" style="margin:-5px 0 0 35px">${T('EN',15)}</div>
<div style="display:flex;gap:8px;margin-left:16px;align-items:center">${I('rainbow',16)}${I('java',16)}${I('net',16,15)}${I('tvol',16,14)}${I('tflag',16)}${I('ccl',16)}</div>
<div class="ck" style="margin:0 0 0 31px">${T('15:42',28)}</div><div class="sd"></div>`);

part('desktop-screen', `<style>
:host{display:flex;flex-direction:column;width:1280px;height:1024px;overflow:hidden}
</style><browser-tabs></browser-tabs><address-bar></address-bar>
<lecture-header></lecture-header><video-stage></video-stage><player-controls></player-controls><task-bar></task-bar>`);

customElements.define('ui-icon', class extends HTMLElement {
  constructor(){ super(); this.attachShadow({mode:'open'}); }
  connectedCallback(){
    const w=this.getAttribute('w'), h=this.getAttribute('h'), [vb,body]=ICONS[this.getAttribute('n')];
    this.shadowRoot.innerHTML=`<style>:host{display:block;flex:none;width:${w}px;height:${h}px}svg{display:block}</style><svg width="${w}" height="${h}" viewBox="${vb}" preserveAspectRatio="none">${body}</svg>`;
  }
});
/* Text whose tracking is adjusted so that it fills the width in its "w" attribute. */
customElements.define('fit-text', class extends HTMLElement {
  constructor(){ super(); this.attachShadow({mode:'open'}).innerHTML='<style>:host{display:block;flex:none;white-space:nowrap}</style><span><slot></slot></span>'; }
  connectedCallback(){
    const w=+this.getAttribute('w'), s=this.shadowRoot.querySelector('span');
    const nat=s.getBoundingClientRect().width;
    this.style.width=w+'px';
    s.style.letterSpacing=((w-nat)/this.textContent.length).toFixed(3)+'px';
  }
});
</script>
</body>
</html>
